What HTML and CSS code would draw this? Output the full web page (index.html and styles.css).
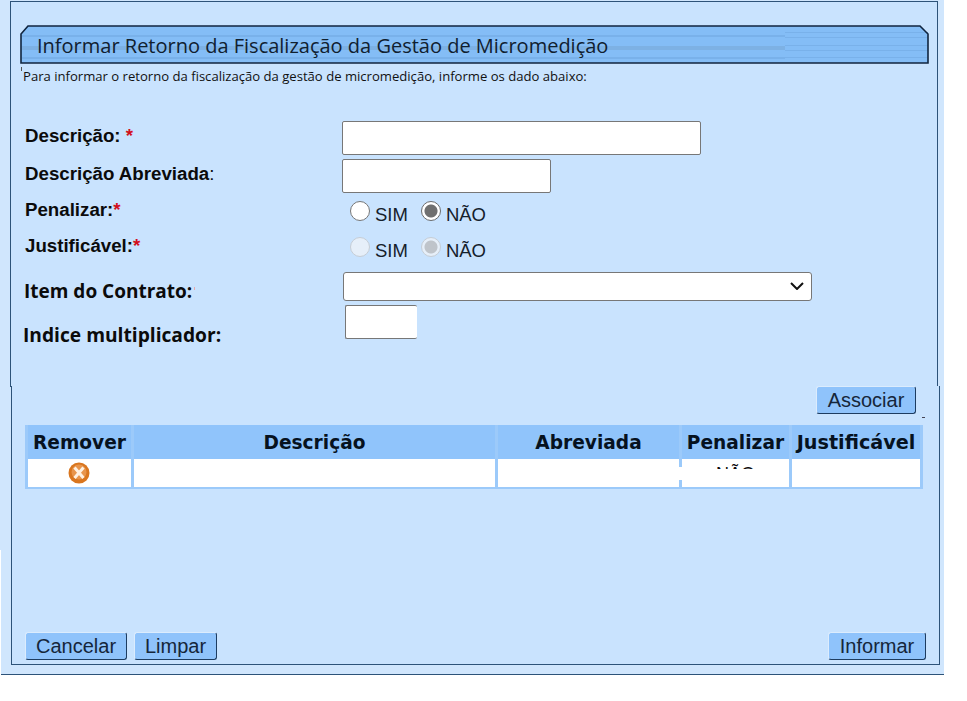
FILE: index.html
```html
<!DOCTYPE html>
<html lang="pt-BR">
<head>
  <meta charset="UTF-8">
  <title>Informar Retorno da Fiscalização da Gestão de Micromedição</title>
  <link rel="stylesheet" href="styles.css">
</head>
<body>
  <div class="outer">
    <div class="form-panel">
      <div class="title-bar">
        <svg class="title-bg" width="909" height="39" viewBox="0 0 909 39">
          <path d="M8 1H900L908 9V38H1V9Z" fill="#84bdf6"/>
          <rect x="2" y="10" width="763" height="2" fill="#79b1ea"/>
          <rect x="2" y="21" width="763" height="4" fill="#7db1e4"/>
          <rect x="2" y="32" width="763" height="2" fill="#79b1ea"/>
          <rect x="765" y="7" width="143" height="1" fill="#79b1ea"/>
          <rect x="765" y="12" width="143" height="1" fill="#79b1ea"/>
          <rect x="765" y="20" width="143" height="1" fill="#79b1ea"/>
          <rect x="765" y="25" width="143" height="1" fill="#79b1ea"/>
          <rect x="765" y="32" width="143" height="1" fill="#79b1ea"/>
          <path d="M8 1H900L908 9V38H1V9Z" fill="none" stroke="#10253f" stroke-width="1.6"/>
        </svg>
        <span class="title-text">Informar Retorno da Fiscalização da Gestão de Micromedição</span>
      </div>
      <p class="note">Para informar o retorno da fiscalização da gestão de micromedição, informe os dado abaixo:</p>

      <div class="form-row row-desc">
        <label class="lbl lbl-top">Descrição: <span class="req">*</span></label>
        <input type="text" class="txt txt-desc">
      </div>
      <div class="form-row row-abrev">
        <label class="lbl lbl-top">Descrição Abreviada<span class="plain">:</span></label>
        <input type="text" class="txt txt-abrev">
      </div>
      <div class="form-row row-pen">
        <label class="lbl lbl-radio">Penalizar:<span class="req">*</span></label>
        <div class="radios">
          <input type="radio" name="pen"><span class="opt">SIM</span>
          <input type="radio" name="pen" checked><span class="opt">NÃO</span>
        </div>
      </div>
      <div class="form-row row-just">
        <label class="lbl lbl-radio">Justificável:<span class="req">*</span></label>
        <div class="radios">
          <input type="radio" name="just" disabled><span class="opt">SIM</span>
          <input type="radio" name="just" checked disabled><span class="opt">NÃO</span>
        </div>
      </div>
      <div class="form-row row-item">
        <label class="lbl lbl-alt">Item do Contrato:<span class="speck"></span></label>
        <div class="sel-wrap">
          <select class="sel"><option></option></select>
          <svg class="chevron" width="14" height="8" viewBox="0 0 14 8">
            <path d="M1 1L7 7L13 1" fill="none" stroke="#111" stroke-width="2"/>
          </svg>
        </div>
      </div>
      <div class="form-row row-indice">
        <label class="lbl lbl-alt lbl-indice">Indice multiplicador:</label>
        <input type="text" class="txt txt-indice">
      </div>
    </div>

    <div class="list-panel">
      <div class="assoc-row">
        <button class="btn btn-assoc">Associar</button>
      </div>
      <table class="grid">
        <tr>
          <th class="col-rem">Remover</th>
          <th class="col-desc">Descrição</th>
          <th class="col-abrev">Abreviada</th>
          <th class="col-pen">Penalizar</th>
          <th class="col-just">Justificável</th>
        </tr>
        <tr>
          <td>
            <svg class="icon-x" width="22" height="22" viewBox="0 0 22 22">
              <circle cx="11" cy="11" r="10.5" fill="#d9761f"/>
              <circle cx="11" cy="10" r="7.5" fill="#e8954c"/>
              <path d="M6.5 5.5L15.5 16M15.5 5.5L6.5 16" stroke="#fff1e2" stroke-width="3" fill="none"/>
            </svg>
          </td>
          <td></td>
          <td></td>
          <td class="cut-cell"><span class="cut-text">NÃO</span><span class="notch"></span></td>
          <td></td>
        </tr>
      </table>
      <div class="actions">
        <button class="btn btn-cancel">Cancelar</button>
        <button class="btn btn-clear">Limpar</button>
        <button class="btn btn-inform">Informar</button>
      </div>
    </div>
  </div>
</body>
</html>
```

FILE: styles.css
```css
body {
  margin: 0;
  background-color: white;
  font-family: "Liberation Sans", Arial, sans-serif;
  color: #0d0d0d;
}

.outer {
  position: relative;
  width: 944px;
  height: 675px;
  padding-top: 1px;
  box-sizing: border-box;
  background-color: #d0e6fd;
  border-bottom: 1px solid #2d5379;
}

/* white sliver on the left edge of the lower half */
.outer::before {
  content: "";
  position: absolute;
  left: 0;
  top: 550px;
  width: 1px;
  bottom: -1px;
  background-color: white;
}

.form-panel {
  box-sizing: border-box;
  width: 928px;
  height: 386px;
  margin-left: 10px;
  padding: 23px 0 0 9px;
  background-color: #c9e3fe;
  border: 1px solid #2d5379;
  border-bottom: none;
}

.title-bar {
  position: relative;
  width: 909px;
  height: 39px;
  line-height: 41px;
}

.title-bg {
  position: absolute;
  left: 0;
  top: 0;
}

.title-text {
  position: relative;
  margin-left: 17px;
  font-family: "Open Sans", sans-serif;
  font-size: 20px;
  color: #10202f;
}

.note {
  position: relative;
  margin: 4px 0 0 3px;
  font-family: "Open Sans", sans-serif;
  font-size: 13.1px;
  line-height: 16px;
  height: 16px;
  color: #111;
}

.note::before {
  content: "";
  position: absolute;
  left: -2px;
  top: -1px;
  width: 1px;
  height: 4px;
  background-color: #555;
}

.form-row {
  display: grid;
  grid-template-columns: 322px 1fr;
  align-items: center;
}

.lbl {
  font-weight: bold;
  font-size: 18.7px;
  padding-left: 5px;
  color: #0b0b0b;
}

.lbl-top {
  align-self: start;
  margin-top: 4px;
  line-height: 22px;
}

.lbl-radio {
  align-self: start;
  margin-top: -2px;
  line-height: 22px;
}

.lbl-alt {
  align-self: start;
  margin-top: 8px;
  font-family: "Open Sans", sans-serif;
  font-size: 19px;
  line-height: 22px;
  padding-left: 4px;
}

.lbl-indice {
  padding-left: 3px;
  margin-top: 19px;
  font-size: 19.2px;
}

.speck {
  display: inline-block;
  width: 1px;
  height: 3px;
  margin: 0 0 8px 2px;
  background-color: #e7a9ad;
}

.req {
  color: #d2101c;
}

.plain {
  font-weight: normal;
}

.txt {
  box-sizing: border-box;
  background-color: white;
  border: 1px solid #777;
  border-radius: 2px;
  padding: 0;
}

.row-desc {
  margin-top: 37px;
}

.row-abrev {
  margin-top: 4px;
}

.row-pen {
  margin-top: 8px;
}

.row-just {
  margin-top: 10px;
}

.row-item {
  margin-top: 9px;
}

.row-indice {
  margin-top: 3px;
  align-items: start;
}

.txt-desc {
  width: 359px;
  height: 34px;
}

.txt-abrev {
  width: 209px;
  height: 34px;
}

.txt-indice {
  width: 72px;
  height: 34px;
  margin-left: 3px;
  border-right: none;
}

.sel-wrap {
  position: relative;
  align-self: start;
  height: 29px;
  width: 469px;
  margin-left: 1px;
}

.sel {
  appearance: none;
  box-sizing: border-box;
  display: block;
  width: 469px;
  height: 29px;
  background-color: white;
  border: 1px solid #777;
  border-radius: 3px;
}

.chevron {
  position: absolute;
  left: 447px;
  top: 10px;
}

.radios {
  display: flex;
  align-items: flex-start;
  height: 26px;
}

.radios input {
  appearance: none;
  box-sizing: border-box;
  width: 20px;
  height: 20px;
  margin: 0 5px 0 8px;
  border: 1px solid #767676;
  border-radius: 50%;
  background-color: white;
}

.radios input:checked {
  border-color: #6c6c6c;
  background: radial-gradient(circle, #6f6f6f 0 6px, white 7px);
}

.radios input:disabled {
  border-color: #c6cdd5;
  background-color: #e6eff9;
}

.radios input:checked:disabled {
  background: radial-gradient(circle, #bfc4ca 0 6px, #e6eff9 7px);
}

.opt {
  margin-top: 3px;
  font-size: 18.5px;
  line-height: 22px;
  color: #15202b;
}

.opt + input {
  margin-left: 13px;
}

.list-panel {
  box-sizing: border-box;
  width: 929px;
  height: 279px;
  margin-left: 11px;
  padding: 0 0 0 13px;
  background-color: #c9e3fe;
  border: 1px solid #2d5379;
  border-top: none;
}

.assoc-row {
  position: relative;
  display: flex;
  justify-content: flex-end;
  margin-top: -1px;
  padding-right: 23px;
}

.assoc-row::after {
  content: "";
  position: absolute;
  left: 897px;
  top: 31px;
  width: 3px;
  height: 1px;
  background-color: #445;
}

.btn {
  box-sizing: border-box;
  height: 28px;
  padding: 0 10px;
  font-family: "Liberation Sans", Arial, sans-serif;
  font-size: 20px;
  color: #15263a;
  background-color: #8fc3fb;
  border: 1px solid;
  border-color: #dcecfd #1d3c60 #1d3c60 #dcecfd;
  border-radius: 3px;
}

.btn-assoc {
  width: 100px;
}

.grid {
  width: 898px;
  margin-top: 11px;
  border-collapse: separate;
  border-spacing: 3px 0;
  table-layout: fixed;
  background-color: #9ccafa;
  padding-bottom: 2px;
}

.grid th {
  height: 34px;
  padding: 0;
  font-family: "DejaVu Sans", sans-serif;
  font-size: 18.6px;
  color: #06121f;
  background-color: #90c4fb;
  white-space: nowrap;
}

.grid .col-just {
  font-size: 19.2px;
}

.grid td {
  height: 28px;
  padding: 0;
  background-color: white;
  vertical-align: top;
}

.col-rem {
  width: 103px;
}

.col-desc {
  width: 361px;
}

.col-abrev {
  width: 181px;
}

.col-pen {
  width: 107px;
}

.icon-x {
  display: block;
  margin: 3px 0 0 40px;
}

.cut-cell {
  position: relative;
  text-align: center;
}

.cut-text {
  display: block;
  height: 10px;
  overflow: hidden;
  font-size: 18px;
  line-height: 30px;
}

.notch {
  position: absolute;
  left: -3px;
  top: 8px;
  width: 3px;
  height: 13px;
  background-color: white;
}

.actions {
  display: flex;
  gap: 7px;
  margin-top: 143px;
  width: 901px;
}

.btn-cancel {
  width: 102px;
}

.btn-clear {
  width: 83px;
}

.btn-inform {
  margin-left: auto;
  width: 98px;
}
```
